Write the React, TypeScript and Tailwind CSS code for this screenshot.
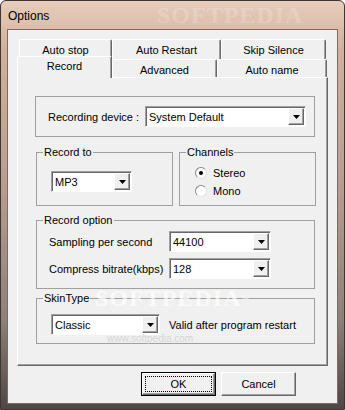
import React from "react";

const ui = "font-['Liberation_Sans',Arial,sans-serif] text-[11px] leading-[14px] text-black";

function Arrow() {
  return (
    <svg width="7" height="4" viewBox="0 0 7 4">
      <polygon points="0,0 7,0 3.5,4" fill="#000" />
    </svg>
  );
}

function Combo({ value, w }: { value: string; w: string }) {
  return (
    <div
      className={`flex h-[21px] ${w} shrink-0 border border-[#a0a0a0] border-r-white border-b-white bg-white p-[1px] shadow-[inset_1px_1px_#696969]`}
    >
      <div className="flex flex-1 items-center pl-[2px] pt-[1px]">{value}</div>
      <div className="flex h-[17px] w-[16px] items-center justify-center border border-t-white border-l-white border-r-[#696969] border-b-[#696969] bg-[#f0f0f0] shadow-[inset_-1px_-1px_#a0a0a0]">
        <Arrow />
      </div>
    </div>
  );
}

function Radio({ label, checked }: { label: string; checked?: boolean }) {
  return (
    <div className="flex h-[16px] items-center">
      <div className="flex h-[12px] w-[12px] items-center justify-center rounded-full border border-[#8a8a8a] border-r-[#e3e3e3] border-b-[#e3e3e3] bg-white">
        {checked && <div className="h-[4px] w-[4px] rounded-full bg-black" />}
      </div>
      <span className="ml-[6px]">{label}</span>
    </div>
  );
}

function Tab({ label, w, selected, up }: { label: string; w: string; selected?: boolean; up?: boolean }) {
  if (selected) {
    return (
      <div
        className={`${w} flex h-[22px] justify-center rounded-t-[2px] border-t border-l border-r border-t-white border-l-white border-r-[#696969] bg-[#f0f0f0] pt-[2px] shadow-[inset_-1px_0_#a0a0a0]`}
      >
        {label}
      </div>
    );
  }
  return (
    <div
      className={`${w} flex ${up ? "h-[20px]" : "h-[18px]"} justify-center rounded-t-[2px] border-t border-l border-r border-t-white border-l-white border-r-[#696969] bg-[#f0f0f0] pt-[3px] shadow-[inset_-1px_0_#a0a0a0]`}
    >
      {label}
    </div>
  );
}

export default function App() {
  return (
    <div
      className={`${ui} relative h-[410px] w-[345px] overflow-hidden rounded-t-[6px] border border-[#3f3633] bg-[linear-gradient(180deg,#e7cdbb_0%,#d2b09c_12%,#b89d8f_45%,#8e807a_78%,#4e4645_100%)]`}
    >
      {/* title bar */}
      <div className="relative flex h-[28px] items-center pl-[7px] pt-[1px]">
        <span className="text-[12px]">Options</span>
        <span className="absolute left-[156px] top-[2px] font-['Liberation_Serif',serif] text-[24px] font-bold leading-[24px] tracking-[1px] text-white/20">
          SOFTPEDIA
        </span>
      </div>

      {/* client area */}
      <div className="ml-[6px] h-[375px] w-[331px] border border-[#7d6a61] bg-[#f0f0f0] pl-[9px] pt-[9px]">
        {/* tab strip */}
        <div className="w-[311px]">
          <div className="flex h-[20px] pl-[2px]">
            <Tab label="Auto stop" w="w-[93px]" up />
            <Tab label="Auto Restart" w="w-[109px]" up />
            <Tab label="Skip Silence" w="w-[105px]" up />
          </div>
          <div className="relative z-10 -mt-[3px] flex h-[22px] items-start">
            <Tab label="Record" w="w-[95px]" selected />
            <div className="mt-[3px] flex">
              <Tab label="Advanced" w="w-[105px]" />
              <Tab label="Auto name" w="w-[110px]" />
            </div>
          </div>

          {/* panel */}
          <div className="-mt-[1px] h-[289px] w-[311px] border border-t-white border-l-white border-r-[#696969] border-b-[#696969] shadow-[inset_-1px_-1px_#a0a0a0] pl-[17px] pt-[18px]">
            <div className="flex h-[41px] w-[280px] items-center border border-[#a0a0a0] pl-[12px]">
              <span className="w-[97px] shrink-0">Recording device :</span>
              <Combo value="System Default" w="w-[161px]" />
            </div>

            <div className="ml-[1px] mt-[8px] flex gap-[6px]">
              <fieldset className="h-[61px] w-[137px] border border-[#a0a0a0] p-0">
                <legend className="ml-[6px] px-[1px] leading-[14px]">Record to</legend>
                <div className="ml-[14px] mt-[12px]">
                  <Combo value="MP3" w="w-[81px]" />
                </div>
              </fieldset>
              <fieldset className="h-[61px] w-[137px] border border-[#a0a0a0] p-0">
                <legend className="ml-[6px] px-[1px] leading-[14px]">Channels</legend>
                <div className="ml-[15px] mt-[6px] flex flex-col gap-[2px]">
                  <Radio label="Stereo" checked />
                  <Radio label="Mono" />
                </div>
              </fieldset>
            </div>

            <fieldset className="ml-[1px] mt-[7px] h-[76px] w-[279px] border border-[#a0a0a0] p-0">
              <legend className="ml-[6px] px-[1px] leading-[14px]">Record option</legend>
              <div className="ml-[12px] mt-[4px] flex flex-col gap-[6px]">
                <div className="flex items-center">
                  <span className="w-[120px] shrink-0">Sampling per second</span>
                  <Combo value="44100" w="w-[102px]" />
                </div>
                <div className="flex items-center">
                  <span className="w-[120px] shrink-0">Compress bitrate(kbps)</span>
                  <Combo value="128" w="w-[102px]" />
                </div>
              </div>
            </fieldset>

            <fieldset className="ml-[1px] mt-[2px] h-[53px] w-[279px] border border-[#a0a0a0] p-0">
              <legend className="ml-[6px] px-[1px] leading-[14px]">SkinType</legend>
              <div className="ml-[14px] mt-[9px] flex items-center">
                <Combo value="Classic" w="w-[109px]" />
                <span className="ml-[9px]">Valid after program restart</span>
              </div>
            </fieldset>
          </div>

          {/* buttons */}
          <div className="mt-[6px] flex justify-end gap-[5px] pr-[32px]">
            <div className="flex h-[24px] w-[75px] border border-black bg-[#f0f0f0] p-0">
              <div className="flex flex-1 border border-t-white border-l-white border-r-[#696969] border-b-[#696969] p-[2px] shadow-[inset_-1px_-1px_#a0a0a0]">
                <div className="flex flex-1 items-center justify-center border border-dotted border-black">OK</div>
              </div>
            </div>
            <div className="flex h-[24px] w-[75px] items-center justify-center border border-t-white border-l-white border-r-[#696969] border-b-[#696969] bg-[#f0f0f0] shadow-[inset_-1px_-1px_#a0a0a0]">
              Cancel
            </div>
          </div>
        </div>
      </div>

      {/* watermark */}
      <div className="pointer-events-none absolute left-[94px] top-[290px] font-['Liberation_Serif',serif] text-[24px] font-bold tracking-[1px] text-white/70">
        SOFTPEDIA<sup className="text-[8px]">™</sup>
      </div>
      <div className="pointer-events-none absolute left-[106px] top-[331px] text-[10px] text-[#d6d6d6]">
        www.softpedia.com
      </div>
    </div>
  );
}
